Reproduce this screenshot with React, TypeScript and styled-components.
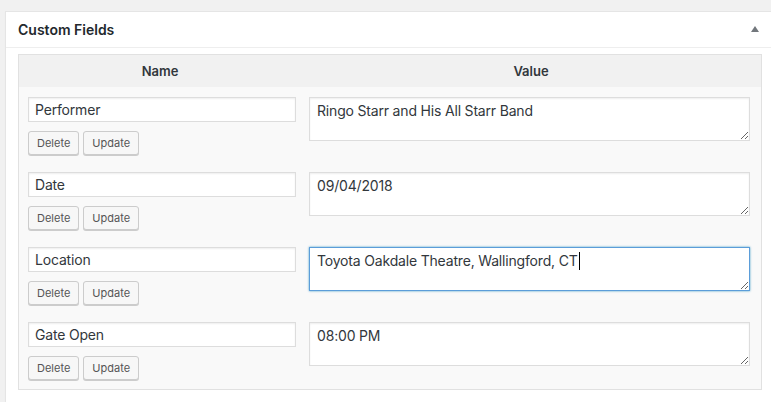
import { FC, useEffect, useRef } from 'react';
import styled, { createGlobalStyle, css } from 'styled-components';

const GlobalStyle = createGlobalStyle`
  html, body {
    margin: 0;
    padding: 0;
    background: #f1f1f1;
  }
  body {
    font-family: Inter, "Noto Sans", "Liberation Sans", sans-serif;
    color: #444;
    overflow: hidden;
  }
`;

interface Field {
  name: string;
  value: string;
  focused?: boolean;
}

const fields: Field[] = [
  { name: 'Performer', value: 'Ringo Starr and His All Starr Band' },
  { name: 'Date', value: '09/04/2018' },
  { name: 'Location', value: 'Toyota Oakdale Theatre, Wallingford, CT', focused: true },
  { name: 'Gate Open', value: '08:00 PM' },
];

const FieldRow: FC<{ field: Field }> = ({ field }) => {
  const ref = useRef<HTMLTextAreaElement>(null);
  useEffect(() => {
    if (field.focused && ref.current) {
      const len = field.value.length;
      ref.current.focus();
      ref.current.setSelectionRange(len, len);
    }
  }, []);
  return (
    <Row>
      <NameCell>
        <NameInput defaultValue={field.name} />
        <Buttons>
          <SmallButton>Delete</SmallButton>
          <SmallButton>Update</SmallButton>
        </Buttons>
      </NameCell>
      <ValueCell>
        <ValueArea ref={ref} defaultValue={field.value} $focused={field.focused} />
        {field.focused && (
          <CaretLayer aria-hidden>
            <Ghost>{field.value}</Ghost>
            <Caret />
          </CaretLayer>
        )}
      </ValueCell>
    </Row>
  );
};

export default function App() {
  return (
    <>
      <GlobalStyle />
      <Postbox>
        <Header>
          <Title>Custom Fields</Title>
          <Toggle />
        </Header>
        <Inside>
          <ListTable>
            <HeadRow>
              <Th>Name</Th>
              <Th>Value</Th>
            </HeadRow>
            {fields.map((f) => (
              <FieldRow key={f.name} field={f} />
            ))}
          </ListTable>
        </Inside>
      </Postbox>
    </>
  );
}

const Postbox = styled.div`
  margin: 11px 0 0 5px;
  width: 790px;
  background: #fff;
  border: 1px solid #e5e5e5;
  box-shadow: 0 1px 1px rgba(0, 0, 0, 0.04);
  box-sizing: border-box;
`;

const Header = styled.div`
  height: 35px;
  display: flex;
  align-items: center;
  padding: 0 0 0 12px;
  border-bottom: 1px solid #eee;
  width: 765px;
  box-sizing: content-box;
`;

const Title = styled.h2`
  margin: 0;
  flex: 1;
  font-size: 14px;
  font-weight: 600;
  color: #23282d;
  line-height: 1.4;
`;

const Toggle = styled.span`
  width: 0;
  height: 0;
  border-left: 4px solid transparent;
  border-right: 4px solid transparent;
  border-bottom: 6px solid #72777c;
  margin-right: 24px;
  margin-top: -1px;
`;

const Inside = styled.div`
  padding: 6px 12px 14px 12px;
  width: 744px;
`;

const ListTable = styled.div`
  border: 1px solid #e1e1e1;
  background: #f9f9f9;
  padding-bottom: 2px;
`;

const grid = css`
  display: grid;
  grid-template-columns: 282px 1fr;
`;

const HeadRow = styled.div`
  ${grid};
  height: 32px;
  background: #f1f1f1;
`;

const Th = styled.div`
  display: flex;
  align-items: center;
  justify-content: center;
  font-size: 13px;
  font-weight: 600;
  color: #32373c;
`;

const Row = styled.div`
  ${grid};
  height: 75px;
  box-sizing: border-box;
  padding-top: 10px;
`;

const NameCell = styled.div`
  display: flex;
  flex-direction: column;
  align-items: flex-start;
  gap: 9px;
  padding-left: 9px;
`;

const ValueCell = styled.div`
  position: relative;
  padding: 0 11px 0 8px;
`;

const fontBase = css`
  font-family: Inter, "Noto Sans", "Liberation Sans", sans-serif;
  font-size: 14px;
  letter-spacing: -0.18px;
  color: #32373c;
`;

const fieldBase = css`
  ${fontBase};
  box-sizing: border-box;
  margin: 0;
  border: 1px solid #ddd;
  background: #fff;
  box-shadow: inset 0 1px 2px rgba(0, 0, 0, 0.07);
  outline: none;
  border-radius: 0;
`;

const NameInput = styled.input`
  ${fieldBase};
  width: 268px;
  height: 25px;
  padding: 0 6px;
`;

const ValueArea = styled.textarea<{ $focused?: boolean }>`
  ${fieldBase};
  display: block;
  width: 441px;
  height: 44px;
  padding: 4px 7px;
  line-height: 18px;
  resize: both;
  caret-color: transparent;
  ${(p) =>
    p.$focused &&
    css`
      border-color: #5b9dd9;
      box-shadow: 0 0 2px rgba(30, 140, 190, 0.8);
    `}
`;

const CaretLayer = styled.div`
  ${fontBase};
  position: absolute;
  top: 5px;
  left: 16px;
  line-height: 18px;
  display: flex;
  align-items: center;
  pointer-events: none;
  white-space: pre;
`;

const Ghost = styled.span`
  color: transparent;
`;

const Caret = styled.span`
  width: 1px;
  height: 18px;
  background: #000;
  margin-left: 1px;
`;

const Buttons = styled.div`
  display: flex;
  gap: 4px;
`;

const SmallButton = styled.button`
  height: 24px;
  padding: 0 8px;
  font-family: Inter, "Noto Sans", "Liberation Sans", sans-serif;
  font-size: 11px;
  color: #555;
  background: #f7f7f7;
  border: 1px solid #ccc;
  border-radius: 3px;
  box-shadow: 0 1px 0 #ccc;
  cursor: pointer;
`;
